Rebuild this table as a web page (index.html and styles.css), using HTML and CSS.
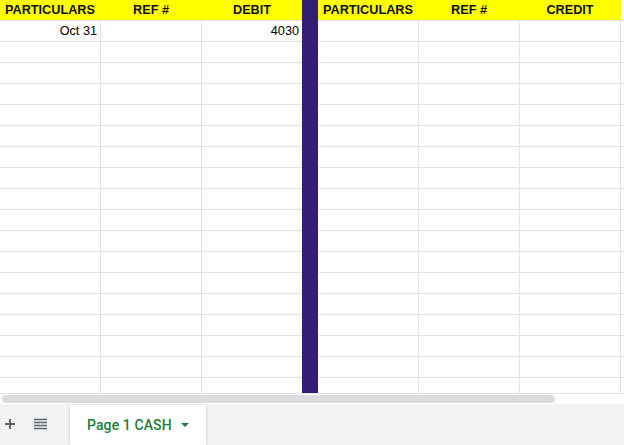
FILE: index.html
```html
<!DOCTYPE html>
<html>
<head>
<meta charset="utf-8">
<link rel="stylesheet" href="styles.css">
</head>
<body>
<div class="sheet">
  <div class="grid">
    <div class="block left">
      <div class="row head">
        <div class="cell c1">PARTICULARS</div>
        <div class="cell c2">REF #</div>
        <div class="cell c3">DEBIT</div>
      </div>
      <div class="row">
        <div class="cell c1 num">Oct 31</div>
        <div class="cell c2"></div>
        <div class="cell c3 num">4030</div>
      </div>
      <div class="row"><div class="cell c1"></div><div class="cell c2"></div><div class="cell c3"></div></div>
      <div class="row"><div class="cell c1"></div><div class="cell c2"></div><div class="cell c3"></div></div>
      <div class="row"><div class="cell c1"></div><div class="cell c2"></div><div class="cell c3"></div></div>
      <div class="row"><div class="cell c1"></div><div class="cell c2"></div><div class="cell c3"></div></div>
      <div class="row"><div class="cell c1"></div><div class="cell c2"></div><div class="cell c3"></div></div>
      <div class="row"><div class="cell c1"></div><div class="cell c2"></div><div class="cell c3"></div></div>
      <div class="row"><div class="cell c1"></div><div class="cell c2"></div><div class="cell c3"></div></div>
      <div class="row"><div class="cell c1"></div><div class="cell c2"></div><div class="cell c3"></div></div>
      <div class="row"><div class="cell c1"></div><div class="cell c2"></div><div class="cell c3"></div></div>
      <div class="row"><div class="cell c1"></div><div class="cell c2"></div><div class="cell c3"></div></div>
      <div class="row"><div class="cell c1"></div><div class="cell c2"></div><div class="cell c3"></div></div>
      <div class="row"><div class="cell c1"></div><div class="cell c2"></div><div class="cell c3"></div></div>
      <div class="row"><div class="cell c1"></div><div class="cell c2"></div><div class="cell c3"></div></div>
      <div class="row"><div class="cell c1"></div><div class="cell c2"></div><div class="cell c3"></div></div>
      <div class="row"><div class="cell c1"></div><div class="cell c2"></div><div class="cell c3"></div></div>
      <div class="row"><div class="cell c1"></div><div class="cell c2"></div><div class="cell c3"></div></div>
      <div class="row"><div class="cell c1"></div><div class="cell c2"></div><div class="cell c3"></div></div>
    </div>
    <div class="divider"></div>
    <div class="block right">
      <div class="row head">
        <div class="cell c4">PARTICULARS</div>
        <div class="cell c5">REF #</div>
        <div class="cell c6">CREDIT</div>
        <div class="cell c7"></div>
      </div>
      <div class="row"><div class="cell c4"></div><div class="cell c5"></div><div class="cell c6"></div><div class="cell c7"></div></div>
      <div class="row"><div class="cell c4"></div><div class="cell c5"></div><div class="cell c6"></div><div class="cell c7"></div></div>
      <div class="row"><div class="cell c4"></div><div class="cell c5"></div><div class="cell c6"></div><div class="cell c7"></div></div>
      <div class="row"><div class="cell c4"></div><div class="cell c5"></div><div class="cell c6"></div><div class="cell c7"></div></div>
      <div class="row"><div class="cell c4"></div><div class="cell c5"></div><div class="cell c6"></div><div class="cell c7"></div></div>
      <div class="row"><div class="cell c4"></div><div class="cell c5"></div><div class="cell c6"></div><div class="cell c7"></div></div>
      <div class="row"><div class="cell c4"></div><div class="cell c5"></div><div class="cell c6"></div><div class="cell c7"></div></div>
      <div class="row"><div class="cell c4"></div><div class="cell c5"></div><div class="cell c6"></div><div class="cell c7"></div></div>
      <div class="row"><div class="cell c4"></div><div class="cell c5"></div><div class="cell c6"></div><div class="cell c7"></div></div>
      <div class="row"><div class="cell c4"></div><div class="cell c5"></div><div class="cell c6"></div><div class="cell c7"></div></div>
      <div class="row"><div class="cell c4"></div><div class="cell c5"></div><div class="cell c6"></div><div class="cell c7"></div></div>
      <div class="row"><div class="cell c4"></div><div class="cell c5"></div><div class="cell c6"></div><div class="cell c7"></div></div>
      <div class="row"><div class="cell c4"></div><div class="cell c5"></div><div class="cell c6"></div><div class="cell c7"></div></div>
      <div class="row"><div class="cell c4"></div><div class="cell c5"></div><div class="cell c6"></div><div class="cell c7"></div></div>
      <div class="row"><div class="cell c4"></div><div class="cell c5"></div><div class="cell c6"></div><div class="cell c7"></div></div>
      <div class="row"><div class="cell c4"></div><div class="cell c5"></div><div class="cell c6"></div><div class="cell c7"></div></div>
      <div class="row"><div class="cell c4"></div><div class="cell c5"></div><div class="cell c6"></div><div class="cell c7"></div></div>
      <div class="row"><div class="cell c4"></div><div class="cell c5"></div><div class="cell c6"></div><div class="cell c7"></div></div>
    </div>
  </div>
  <div class="hscroll"><div class="thumb"></div></div>
  <div class="tabbar">
    <button class="icon-btn add" aria-label="Add sheet">
      <svg width="12" height="12" viewBox="0 0 12 12"><path d="M6 1v10M1 6h10" stroke="#5f6368" stroke-width="2" fill="none"/></svg>
    </button>
    <button class="icon-btn list" aria-label="All sheets">
      <svg width="13" height="12" viewBox="0 0 13 12"><path d="M0 1.5h13M0 4.5h13M0 7.5h13M0 10.5h13" stroke="#5f6368" stroke-width="1.6" fill="none"/></svg>
    </button>
    <div class="tab active">
      <span class="tab-name">Page 1 CASH</span>
      <svg class="caret" width="8" height="4" viewBox="0 0 8 4"><path d="M0 0h8L4 4z" fill="#188038"/></svg>
    </div>
  </div>
</div>
</body>
</html>
```
FILE: styles.css
```css
* { box-sizing: border-box; }
html, body {
  margin: 0;
  padding: 0;
  width: 624px;
  height: 445px;
  overflow: hidden;
  background: #fff;
}
.sheet {
  display: flex;
  flex-direction: column;
  width: 624px;
  height: 445px;
  font-family: "Liberation Sans", Arial, sans-serif;
}
.grid {
  display: flex;
  height: 393px;
  overflow: hidden;
  flex: none;
}
.block {
  display: flex;
  flex-direction: column;
}
.left { width: 302px; flex: none; }
.right { flex: 1; }
.divider {
  width: 16px;
  flex: none;
  background: #351c75;
}
.row {
  display: flex;
  height: 21px;
  flex: none;
  border-bottom: 1px solid #e2e3e3;
}
.cell {
  height: 20px;
  border-right: 1px solid #e2e3e3;
  font-size: 12.7px;
  line-height: 20px;
  color: #000;
  padding: 0 3px;
  white-space: nowrap;
  overflow: hidden;
}
.c1, .c2, .c4, .c5, .c6 { width: 101px; flex: none; }
.c3 { width: 100px; flex: none; border-right: none; }
.c7 { flex: 1; }
.num { text-align: right; }
.head .cell {
  background: #ffff00;
  border-right-color: #ffff00;
  font-weight: bold;
  text-align: center;
  color: #111;
  padding: 0;
}
.head .c7 { background: #fff; border-right: none; }
.hscroll {
  height: 11px;
  flex: none;
  border-top: 1px solid #e1e3e1;
  background: #fff;
  padding: 1px 0 0 2px;
}
.thumb {
  width: 553px;
  height: 8px;
  border-radius: 4px;
  background: #dadce0;
}
.tabbar {
  flex: 1;
  background: #f1f3f4;
  display: flex;
  align-items: stretch;
  padding-top: 1px;
}
.icon-btn {
  border: none;
  background: none;
  padding: 0;
  display: flex;
  align-items: center;
  justify-content: center;
  margin-bottom: 2px;
}
.add { width: 20px; margin-left: 0; }
.list { width: 22px; margin-left: 9px; }
.tab {
  margin-left: 19px;
  width: 136px;
  background: #fff;
  box-shadow: 0 1px 3px rgba(60,64,67,0.25);
  display: flex;
  align-items: center;
  padding-left: 17px;
  padding-bottom: 1px;
}
.tab-name {
  font-family: Roboto, "Liberation Sans", sans-serif;
  font-weight: 500;
  font-size: 14px;
  color: #188038;
  letter-spacing: 0.1px;
}
.caret { margin-left: 9px; margin-top: 1px; }
```
